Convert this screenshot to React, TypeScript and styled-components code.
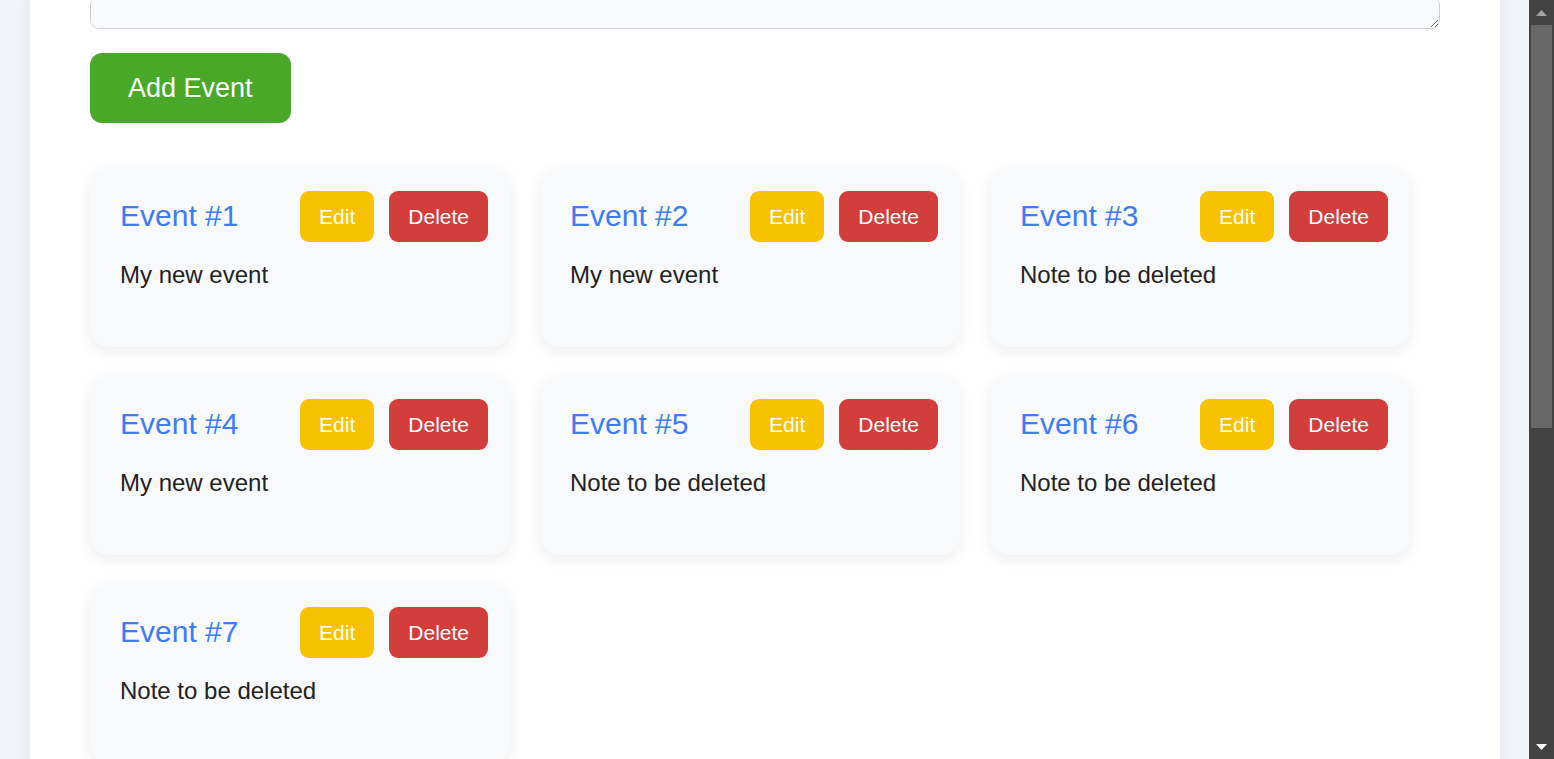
import React, { useLayoutEffect, useRef } from "react";
import styled, { createGlobalStyle } from "styled-components";

const GlobalStyle = createGlobalStyle`
  html, body {
    margin: 0;
    padding: 0;
    height: 100%;
    overflow: hidden;
  }
  body {
    background: #f1f4f8;
    font-family: "Liberation Sans", Arial, sans-serif;
  }
  *, *::before, *::after { box-sizing: border-box; }
`;

const Shell = styled.div`
  display: flex;
  height: 100vh;
`;

const Viewport = styled.div`
  flex: 1;
  min-width: 0;
  overflow: hidden;
`;

const ScrollBar = styled.div`
  width: 25px;
  flex: 0 0 25px;
  display: flex;
  flex-direction: column;
  background: #424242;
`;

const ArrowButton = styled.div`
  height: 25px;
  flex: 0 0 25px;
  display: flex;
  align-items: center;
  justify-content: center;
`;

const Track = styled.div`
  flex: 1;
  padding: 0 2px;
`;

const Thumb = styled.div`
  height: 403px;
  background: #686868;
`;

const Container = styled.main`
  margin: 0 29px 0 30px;
  background: #ffffff;
  box-shadow: 0 0 14px rgba(40, 60, 90, 0.08);
  padding: 0 60px 566px;
`;

const Description = styled.textarea`
  display: block;
  width: 100%;
  height: 33px;
  margin: 0;
  padding: 10px 14px;
  border: 1px solid #cdd1d6;
  border-radius: 9px;
  background: #f8f9fa;
  font-family: "Liberation Sans", Arial, sans-serif;
  font-size: 21px;
  resize: vertical;
`;

const AddButton = styled.button`
  display: block;
  margin-top: 24px;
  height: 70px;
  padding: 0 38px;
  border: none;
  border-radius: 12px;
  background: #49a828;
  color: #ffffff;
  font-family: "Liberation Sans", Arial, sans-serif;
  font-size: 27px;
  cursor: pointer;
`;

const Grid = styled.section`
  display: grid;
  grid-template-columns: repeat(3, 420px);
  column-gap: 30px;
  row-gap: 29px;
  margin-top: 45px;
`;

const Card = styled.article`
  height: 179px;
  padding: 23px 22px 0 30px;
  background: #f8f9fa;
  border-radius: 18px;
  box-shadow: 0 4px 14px rgba(0, 0, 0, 0.08);
`;

const CardHeader = styled.div`
  display: flex;
  align-items: center;
  justify-content: space-between;
  height: 51px;
`;

const Title = styled.h3`
  margin: 0 0 2px;
  font-size: 30px;
  font-weight: 400;
  color: #3d7cf6;
`;

const Actions = styled.div`
  display: flex;
  gap: 15px;
`;

const ActionButton = styled.button<{ $variant: "edit" | "delete" }>`
  height: 51px;
  padding: 0 19px;
  border: none;
  border-radius: 9px;
  background: ${(p) => (p.$variant === "edit" ? "#f8c200" : "#d13e3b")};
  color: #ffffff;
  font-family: "Liberation Sans", Arial, sans-serif;
  font-size: 21px;
  cursor: pointer;
`;

const Note = styled.p`
  margin: 19px 0 0;
  font-size: 24px;
  color: #222222;
`;

const events = [
  { id: 1, text: "My new event" },
  { id: 2, text: "My new event" },
  { id: 3, text: "Note to be deleted" },
  { id: 4, text: "My new event" },
  { id: 5, text: "Note to be deleted" },
  { id: 6, text: "Note to be deleted" },
  { id: 7, text: "Note to be deleted" },
];

export default function App() {
  const viewRef = useRef<HTMLDivElement>(null);

  useLayoutEffect(() => {
    if (viewRef.current) viewRef.current.scrollTop = 4;
  }, []);

  return (
    <>
      <GlobalStyle />
      <Shell>
        <Viewport ref={viewRef}>
          <Container>
            <Description aria-label="Event description" />
            <AddButton>Add Event</AddButton>
            <Grid>
              {events.map((e) => (
                <Card key={e.id}>
                  <CardHeader>
                    <Title>Event #{e.id}</Title>
                    <Actions>
                      <ActionButton $variant="edit">Edit</ActionButton>
                      <ActionButton $variant="delete">Delete</ActionButton>
                    </Actions>
                  </CardHeader>
                  <Note>{e.text}</Note>
                </Card>
              ))}
            </Grid>
          </Container>
        </Viewport>
        <ScrollBar aria-hidden="true">
          <ArrowButton>
            <svg width="11" height="6" viewBox="0 0 11 6">
              <polygon points="0,6 5.5,0 11,6" fill="#a3a3a3" />
            </svg>
          </ArrowButton>
          <Track>
            <Thumb />
          </Track>
          <ArrowButton>
            <svg width="11" height="6" viewBox="0 0 11 6">
              <polygon points="0,0 11,0 5.5,6" fill="#ffffff" />
            </svg>
          </ArrowButton>
        </ScrollBar>
      </Shell>
    </>
  );
}
